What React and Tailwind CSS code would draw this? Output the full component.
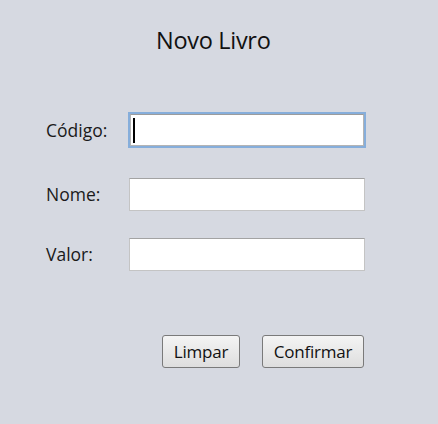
import React from "react";

const font = { fontFamily: '"Open Sans", "Noto Sans", sans-serif' };

function Field({ focused }) {
  if (focused) {
    return (
      <div className="w-[238px] h-[36px] border-2 border-[#86aedb] bg-white">
        <div className="h-full border border-[#b4b4b4] border-t-[#9c9c9c] flex items-center pl-[2px]">
          <div className="w-[2px] h-[25px] bg-black" />
        </div>
      </div>
    );
  }
  return <div className="ml-px w-[236px] h-[33px] bg-white border border-[#c4c4c4] border-t-[#a3a3a3]" />;
}

function Row({ label, focused, className }) {
  return (
    <div className={`flex items-center pl-[46px] ${className}`}>
      <span className="w-[82px] text-[17.5px] text-[#1a1a1a]">{label}</span>
      <Field focused={focused} />
    </div>
  );
}

function Btn({ children, w }) {
  return (
    <button
      className={`${w} h-[33px] rounded-[3px] border border-[#7a7a7a] bg-gradient-to-b from-[#f4f4f4] to-[#dedede] text-[17px] text-[#111] tracking-[-0.2px] flex items-center justify-center`}
    >
      {children}
    </button>
  );
}

export default function App() {
  return (
    <div className="w-[438px] h-[424px] bg-[#d6d9e1] flex flex-col" style={font}>
      <div className="pt-[25px] pl-[156px] h-[57px] text-[23.5px] leading-[30px] text-[#111] tracking-[-0.3px]">
        Novo Livro
      </div>
      <Row label="Código:" focused className="mt-[55px]" />
      <Row label="Nome:" className="mt-[30px]" />
      <Row label="Valor:" className="mt-[27px]" />
      <div className="flex gap-[22px] pl-[162px] mt-[64px]">
        <Btn w="w-[78px]">Limpar</Btn>
        <Btn w="w-[102px]">Confirmar</Btn>
      </div>
    </div>
  );
}
